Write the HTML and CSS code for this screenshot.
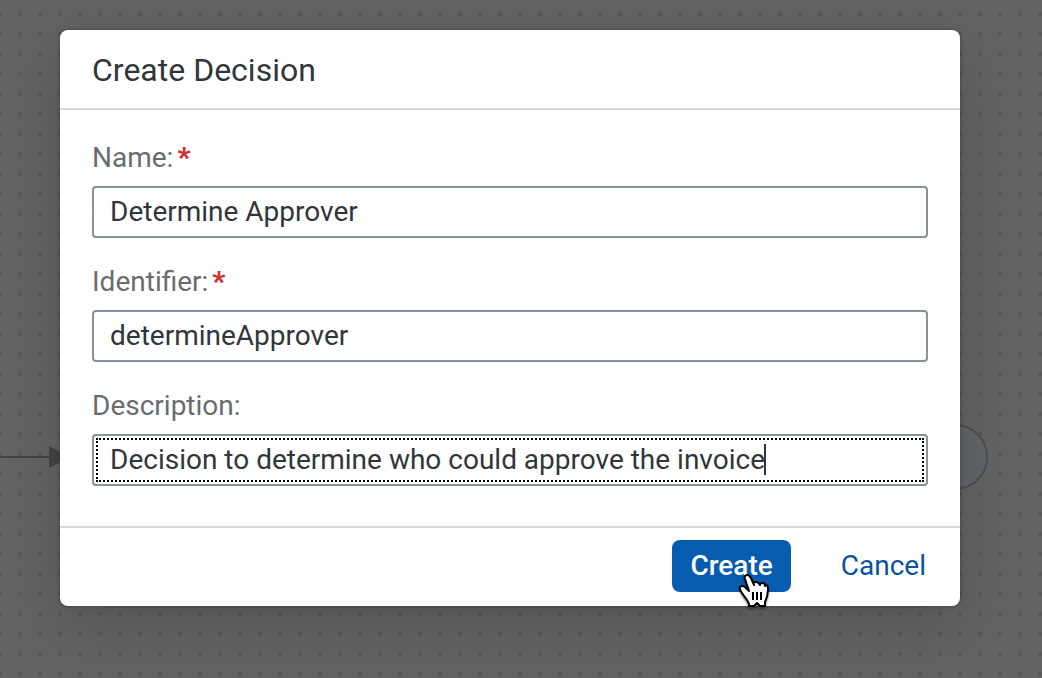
FILE: index.html
```html
<!DOCTYPE html>
<html lang="en">
<head>
<meta charset="utf-8">
<meta name="viewport" content="width=device-width, initial-scale=1">
<title>Create Decision</title>
<link rel="stylesheet" href="styles.css">
</head>
<body class="page">
<svg class="canvas" aria-hidden="true" width="100%" height="100%">
  <defs>
    <pattern id="dots" width="20" height="20" patternUnits="userSpaceOnUse" x="8" y="2">
      <rect class="canvas-dot" x="10" y="10" width="4" height="4"/>
    </pattern>
  </defs>
  <rect width="100%" height="100%" fill="url(#dots)"/>
  <path class="canvas-line" d="M0 457H50"/>
  <path class="canvas-arrow" d="M49 446L71 457L49 468Z"/>
  <circle class="canvas-node" cx="955" cy="457" r="32"/>
</svg>
<main class="dialog" role="dialog" aria-labelledby="dialog-title">
  <header class="dialog-header"><h1 class="dialog-title" id="dialog-title">Create Decision</h1></header>
  <form class="dialog-form">
    <div class="dialog-body">
      <div class="field">
        <label class="label" for="name">Name:<span class="required">*</span></label>
        <input class="input" id="name" type="text" value="Determine Approver">
      </div>
      <div class="field">
        <label class="label" for="identifier">Identifier:<span class="required">*</span></label>
        <input class="input" id="identifier" type="text" value="determineApprover">
      </div>
      <div class="field">
        <label class="label" for="description">Description:</label>
        <div class="input-wrap">
          <input class="input" id="description" type="text" value="Decision to determine who could approve the invoice">
          <span class="focus-ring"></span>
          <span class="caret"></span>
        </div>
      </div>
    </div>
    <footer class="dialog-footer">
      <button class="button button-primary" type="button">Create
        <svg class="cursor" aria-hidden="true" width="34" height="38" viewBox="0 0 34 38">
          <path class="cursor-hand" d="M11 31C11 27 7 24 4 19C3 17 1 15 2 13C3 11 6 12 8 14L11 17L7 5C6 3 7 1 9 1C11 1 12 2 13 4L16 11C15 9 16 8 18 8C20 8 21 9 22 11C22 9 23 9 25 9C27 9 27 11 27 12C29 10 30 12 30 15C30 22 29 24 27 28V32H22L19 29L16 32H11Z"/>
          <path class="cursor-lines" d="M15 18V26M19 18V26M23 18V26"/>
        </svg>
      </button>
      <button class="button button-link" type="button">Cancel</button>
    </footer>
  </form>
</main>
</body>
</html>
```
FILE: styles.css
```css
* { box-sizing: border-box; }

.page {
  margin: 0;
  min-height: 100vh;
  padding: 30px 82px 72px 60px;
  background: #636363;
  color: #32363a;
  font-family: Roboto, "Liberation Sans", sans-serif;
  font-size: 28px;
  overflow: hidden;
}

.canvas { position: absolute; inset: 0; }
.canvas-dot { fill: #595959; }
.canvas-line { stroke: #444; stroke-width: 2; }
.canvas-arrow { fill: #444; }
.canvas-node { fill: #626568; stroke: #4f4f4f; stroke-width: 2; }

.dialog {
  position: relative;
  background: #fff;
  border-radius: 8px;
  box-shadow: 0 0 4px rgba(0, 0, 0, .3), 0 20px 60px rgba(0, 0, 0, .15);
}

.dialog-header {
  padding: 20px 32px 18px;
  border-bottom: 2px solid #d9d9d9;
}

.dialog-title {
  margin: 0;
  font-size: 32px;
  line-height: 40px;
  font-weight: 400;
}

.dialog-form { margin: 0; }

.dialog-body {
  display: flex;
  flex-direction: column;
  gap: 26px;
  padding: 30px 32px 40px;
}

.field {
  display: flex;
  flex-direction: column;
  gap: 10px;
}

.label {
  color: #6a6d70;
  line-height: 36px;
}

.required {
  margin-left: 4px;
  color: #d03030;
  font-weight: 900;
}

.input-wrap { position: relative; }

.input {
  display: block;
  width: 100%;
  height: 52px;
  padding: 0 16px 2px;
  border: 2px solid #89919a;
  border-radius: 4px;
  background: #fff;
  color: inherit;
  font: inherit;
}

.focus-ring {
  position: absolute;
  inset: 4px;
  border: 2px dotted #000;
  pointer-events: none;
}

.caret {
  position: absolute;
  left: 672px;
  top: 10px;
  width: 2px;
  height: 31px;
  background: #32363a;
}

.dialog-footer {
  display: flex;
  justify-content: flex-end;
  gap: 32px;
  padding: 12px 16px 14px;
  border-top: 2px solid #d9d9d9;
}

.button {
  height: 52px;
  padding: 0 18px 2px;
  border: 0;
  border-radius: 8px;
  font: inherit;
}

.button-primary {
  position: relative;
  background: #085caf;
  color: #fff;
  font-weight: 500;
}

.button-link {
  background: transparent;
  color: #0854a0;
}

.cursor {
  position: absolute;
  left: 66px;
  top: 34px;
  filter: drop-shadow(0 2px 1px rgba(0, 0, 0, .4));
}
.cursor-hand { fill: #fff; stroke: #000; stroke-width: 2; stroke-linejoin: round; }
.cursor-lines { fill: none; stroke: #000; stroke-width: 2; }
```
